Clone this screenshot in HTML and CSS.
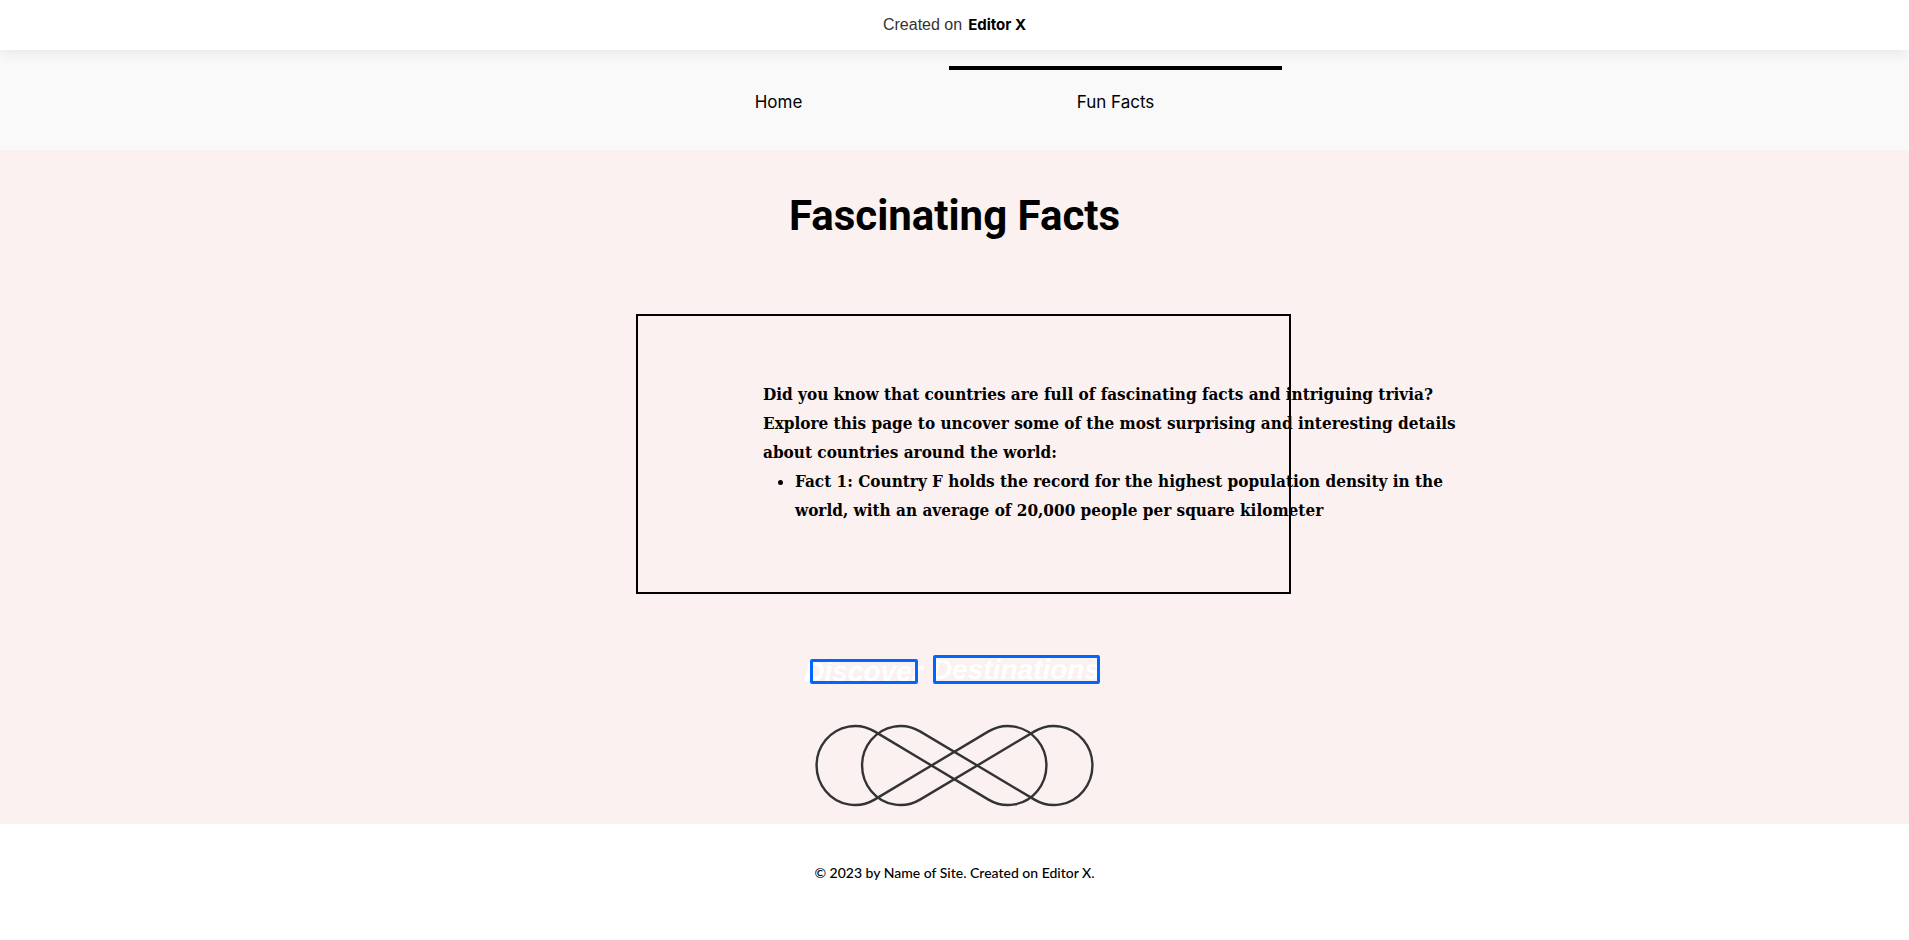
FILE: index.html
```html
<!DOCTYPE html>
<html lang="en">
<head>
<meta charset="utf-8">
<meta name="viewport" content="width=device-width, initial-scale=1">
<title>Fun Facts</title>
<link rel="stylesheet" href="styles.css">
</head>
<body>
<a class="banner" href="#"><span class="banner-light">Created on</span> <strong class="banner-brand">Editor X</strong></a>
<header class="header">
  <nav class="nav">
    <a class="nav-item" href="#">Home</a>
    <a class="nav-item nav-current" href="#" aria-current="page">Fun Facts</a>
  </nav>
</header>
<main class="main">
  <h1 class="title">Fascinating Facts</h1>
  <section class="card">
    <div class="copy">
      <p class="copy-text">Did you know that countries are full of fascinating facts and intriguing trivia?<br>Explore this page to uncover some of the most surprising and interesting details<br>about countries around the world:</p>
      <ul class="copy-list">
        <li>Fact 1: Country F holds the record for the highest population density in the<br>world, with an average of 20,000 people per square kilometer</li>
      </ul>
    </div>
  </section>
  <div class="links">
    <a class="link link-short" href="#">Discover</a>
    <a class="link link-long" href="#">Destinations</a>
  </div>
  <svg class="loops" viewBox="0 0 280 84" aria-hidden="true">
    <g fill="none" stroke="#333" stroke-width="2.4">
      <path d="M59.5 7.4 A38.5 39.5 0 1 0 59.5 75.6 L173.5 7.4 A38.5 39.5 0 1 1 173.5 75.6 Z"/>
      <path d="M105 7.4 A38.5 39.5 0 1 0 105 75.6 L219.5 7.4 A38.5 39.5 0 1 1 219.5 75.6 Z"/>
    </g>
  </svg>
</main>
<footer class="footer">© 2023 by Name of Site. Created on Editor X.</footer>
</body>
</html>
```
FILE: styles.css
```css
* { box-sizing: border-box; }
body {
  margin: 0;
  background: #fff;
  color: #000;
  font-family: Inter, "Liberation Sans", sans-serif;
}
.banner {
  position: relative;
  display: flex;
  justify-content: center;
  align-items: center;
  gap: 6px;
  height: 50px;
  background: #fff;
  box-shadow: 0 0 15px rgba(22, 45, 61, 0.12);
  color: #000;
  text-decoration: none;
}
.banner-light {
  font: 300 16px/20px "Liberation Sans", sans-serif;
  color: #333;
}
.banner-brand { font: 700 15px/20px Inter, sans-serif; }
.header {
  height: 100px;
  padding: 16px 15px 0 0;
  background: #f9f9f9;
}
.nav {
  display: flex;
  justify-content: center;
  gap: 4px;
}
.nav-item {
  width: 333px;
  padding: 22px 0;
  border-top: 4px solid transparent;
  color: #000;
  font-size: 17px;
  line-height: 20px;
  text-align: center;
  text-decoration: none;
}
.nav-current { border-top-color: #000; }
.main {
  display: flex;
  flex-direction: column;
  align-items: center;
  padding: 36px 0 16px;
  background: #fbf1f0;
}
.title {
  margin: 0;
  font: 700 42px/60px Roboto, sans-serif;
}
.card {
  width: 655px;
  margin: 68px 0 0 18px;
  padding: 64px 0 67px 125px;
  border: 2px solid #000;
}
.copy {
  font: 700 17px/29px "DejaVu Serif Condensed", "DejaVu Serif", serif;
  white-space: nowrap;
}
.copy-text, .copy-list { margin: 0; }
.copy-list { padding-left: 32px; }
.links {
  display: flex;
  align-items: flex-end;
  gap: 15px;
  height: 29px;
  margin-top: 61px;
}
.link {
  position: relative;
  display: flex;
  justify-content: center;
  align-items: center;
  color: #fff;
  font: italic 700 28px/24px "Liberation Sans", sans-serif;
  text-decoration: none;
}
.link::after {
  content: "";
  position: absolute;
  inset: 0;
  border: 3px solid #06f;
  border-radius: 2px;
}
.link-short { width: 108px; height: 25px; }
.link-long { width: 167px; height: 29px; }
.loops {
  width: 280px;
  height: 84px;
  margin-top: 40px;
}
.footer {
  padding: 38px 0;
  font: 500 14px/22px Lato, sans-serif;
  text-align: center;
}
```
